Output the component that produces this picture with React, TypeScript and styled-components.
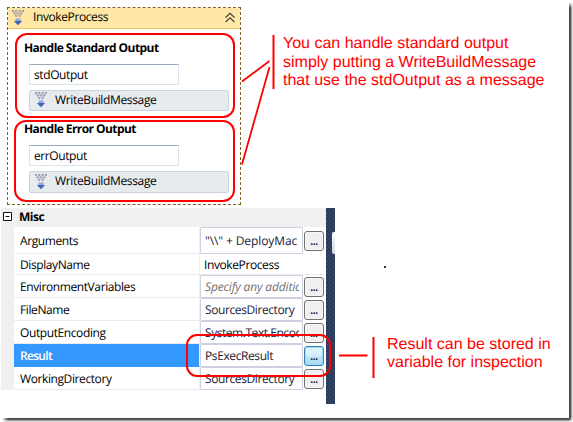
import React from "react";
import styled, { createGlobalStyle } from "styled-components";

const GlobalStyle = createGlobalStyle`
  * { box-sizing: border-box; }
  body { margin: 0; background: #fff; }
`;

const Page = styled.main`
  position: relative;
  display: grid;
  grid-template-columns: 569px 4px;
  grid-template-rows: 418px 4px;
  width: 573px;
  height: 422px;
  overflow: hidden;
  background: #fff;
  color: #000;
  font: 12px/16px "Open Sans", "Noto Sans", sans-serif;
  letter-spacing: -0.4px;
  text-rendering: geometricPrecision;
  white-space: nowrap;
`;

const Content = styled.div`
  display: grid;
  grid-template-columns: 335px 1fr;
`;

const RightShadow = styled.div`
  margin-top: 2px;
  background: linear-gradient(90deg, #484848 0 1px, #5c5c5c 1px 2px, #a0a0a0 2px 3px, #dadada 3px);
  mask-image: linear-gradient(180deg, transparent, #000 6px);
`;

const BottomShadow = styled.div`
  grid-column: 1 / -1;
  margin-left: 2px;
  background: linear-gradient(180deg, #484848 0 1px, #5c5c5c 1px 2px, #a0a0a0 2px 3px, #dadada 3px);
  mask-image: linear-gradient(90deg, transparent, #000 6px calc(100% - 4px), transparent);
`;

const Editors = styled.div`
  display: flex;
  flex-direction: column;
  gap: 3px;
  padding-top: 7px;
`;

const Designer = styled.section`
  display: flex;
  flex-direction: column;
  width: 234px;
  height: 198px;
  margin-left: 7px;
  border: 1px dashed #7d6327;
`;

const DesignerHeader = styled.header`
  display: flex;
  align-items: center;
  height: 21px;
  padding: 0 4px 2px 3px;
  background: #ffe8a6;
  border-bottom: 1px solid #e5c365;
`;

const DesignerTitle = styled.span`
  flex: 1;
  padding-left: 8px;
`;

const Handler = styled.div<{ $height: number }>`
  display: flex;
  flex-direction: column;
  height: ${(p) => p.$height}px;
  padding: 11px 11px 0 16px;
`;

const HandlerTitle = styled.h3`
  margin: 0;
  font-size: 12px;
  font-weight: 700;
  line-height: 16px;
  letter-spacing: -0.57px;
`;

const ArgumentBox = styled.div`
  width: 150px;
  height: 21px;
  margin: 8px 0 5px 5px;
  padding: 2px 4px;
  border: 1px solid #dbe4ee;
  border-top-color: #9aa9ba;
  border-radius: 1px;
`;

const Activity = styled.div`
  display: flex;
  align-items: center;
  gap: 7px;
  width: 200px;
  height: 22px;
  margin-left: 5px;
  padding: 0 4px 2px;
  background: #e7ebee;
  border: 1px solid #ccd3e0;
  border-radius: 2px;
  letter-spacing: -0.35px;
`;

const PropertyGrid = styled.section`
  display: grid;
  grid-template-columns: 325px 9px;
  height: 196px;
  margin-left: 1px;
`;

const Rows = styled.div`
  display: flex;
  flex-direction: column;
`;

const CategoryRow = styled.div`
  display: flex;
  align-items: center;
  gap: 7px;
  height: 19px;
  padding: 0 2px 2px;
  background: #f0f0f0;
  font-weight: 700;
  letter-spacing: -0.5px;
`;

const PropertyRow = styled.div<{ $height: number }>`
  display: grid;
  grid-template-columns: 186px 103px 21px;
  height: ${(p) => p.$height}px;
  border-left: 13px solid #f0f0f0;
`;

const PropertyName = styled.div<{ $selected?: boolean }>`
  display: flex;
  align-items: center;
  padding: 2px 0 0 6px;
  border-right: 1px solid #f0f0f0;
  border-bottom: 1px solid ${(p) => (p.$selected ? "#3399ff" : "#ebebeb")};
  background: ${(p) => (p.$selected ? "#3399ff" : "#fff")};
  color: ${(p) => (p.$selected ? "#fff" : "#000")};
  font-weight: ${(p) => (p.$selected ? 600 : 400)};
  letter-spacing: ${(p) => (p.$selected ? -0.7 : -0.4)}px;
`;

const PlainValue = styled.div`
  display: flex;
  grid-column: 2 / -1;
  align-items: center;
  padding: 1px 0 0 4px;
  border-bottom: 1px solid #ebebeb;
`;

const ExpressionBox = styled.div<{ $hint?: boolean }>`
  display: flex;
  align-items: center;
  padding-left: 4px;
  border: 1px solid #ccd0e0;
  border-radius: 1px;
  color: ${(p) => (p.$hint ? "#707070" : "#1b2036")};
  font-style: ${(p) => (p.$hint ? "italic" : "normal")};
`;

const ExpressionText = styled.span<{ $spacing?: number }>`
  width: 94px;
  overflow: hidden;
  letter-spacing: ${(p) => p.$spacing ?? -0.4}px;
`;

const MoreButton = styled.button<{ $active?: boolean }>`
  display: flex;
  align-items: flex-end;
  justify-content: center;
  align-self: center;
  width: 20px;
  height: 20px;
  margin: 0 0 0 1px;
  padding: 0 0 2px;
  border: 1px solid ${(p) => (p.$active ? "#3c7fb1" : "#707070")};
  border-radius: 3px;
  background: ${(p) => (p.$active ? "linear-gradient(#e3f4fc, #d6effb 50%, #bee6f8 50%, #a9dbf4)" : "#f0f0f0")};
  box-shadow: inset 0 0 0 1px ${(p) => (p.$active ? "#9bdcf5" : "#f8f8f8")};
  color: #1a1030;
  font: 700 10px/13px "Open Sans", sans-serif;
  letter-spacing: -0.4px;
`;

const Splitter = styled.div`
  display: flex;
  justify-content: flex-end;
  padding-top: 24px;
  background: #2d3d5e repeating-conic-gradient(#2b3a5a 0 25%, #334566 0 50%) 0 0 / 4px 4px;
`;

const SplitterTab = styled.div`
  width: 3px;
  height: 22px;
  border-radius: 2px 0 0 2px;
  background: linear-gradient(#fff, #cfd5e2);
`;

const Notes = styled.aside`
  display: flex;
  flex-direction: column;
  align-items: flex-start;
  color: #f00;
  font: 16px/18.5px "Liberation Sans", Arial, sans-serif;
  letter-spacing: 0;
`;

const Note = styled.p<{ $top: number; $left: number }>`
  margin: ${(p) => p.$top}px 0 0 ${(p) => p.$left}px;
`;

const Dot = styled.div`
  width: 2px;
  height: 2px;
  margin: 175px 0 0 49px;
  background: #333;
`;

const Overlay = styled.svg`
  position: absolute;
  inset: 0;
  pointer-events: none;
`;

const ActivityIcon = () => (
  <svg width="14" height="17" viewBox="0 0 14 17">
    <g fill="#fff" stroke="#686d88" strokeWidth="0.7">
      <circle cx="2" cy="2" r="0.8" /><circle cx="5.2" cy="2" r="0.8" /><circle cx="8.600" cy="2" r="0.8" /><circle cx="11.800" cy="2" r="0.8" />
      <circle cx="3.600" cy="4.400" r="0.8" /><circle cx="6.900" cy="4.400" r="0.8" /><circle cx="10.200" cy="4.400" r="0.8" />
      <circle cx="5.200" cy="6.800" r="0.8" /><circle cx="8.600" cy="6.800" r="0.8" />
    </g>
    <path d="M4.500 9.500h5v2.500h-5z" fill="#8ea6d8" />
    <path d="M2.800 12h8.400L7 16.200z" fill="#3f66b8" />
  </svg>
);

const CollapseIcon = () => (
  <svg width="12" height="12" viewBox="0 0 12 12" fill="none" stroke="#404040" strokeWidth="1.2">
    <path d="M1.500 6.500 6 2.300 10.500 6.500M1.500 11 6 6.800l4.500 4.200" />
  </svg>
);

const ToggleIcon = () => (
  <svg width="9" height="9" viewBox="0 0 9 9" fill="#fff" stroke="#111">
    <path d="M.5.5h8v8h-8zM2.500 4.500h4" />
  </svg>
);

type Property = {
  name: string;
  value: string;
  height: number;
  kind?: "plain" | "hint" | "selected";
  spacing?: number;
};

const properties: Property[] = [
  { name: "Arguments", value: '"\\\\" + DeployMac', height: 27, spacing: -0.1 },
  { name: "DisplayName", value: "InvokeProcess", height: 21, kind: "plain" },
  { name: "EnvironmentVariables", value: "Specify any additio", height: 23, kind: "hint", spacing: -0.15 },
  { name: "FileName", value: "SourcesDirectory", height: 23 },
  { name: "OutputEncoding", value: "System.Text.Encod", height: 23, spacing: -0.45 },
  { name: "Result", value: "PsExecResult", height: 23, kind: "selected" },
  { name: "WorkingDirectory", value: "SourcesDirectory", height: 23 },
];

const handlers = [
  { title: "Handle Standard Output", argument: "stdOutput", height: 81 },
  { title: "Handle Error Output", argument: "errOutput", height: 86 },
];

export default function App() {
  return (
    <>
      <GlobalStyle />
      <Page>
        <Content>
          <Editors>
            <Designer>
              <DesignerHeader>
                <ActivityIcon />
                <DesignerTitle>InvokeProcess</DesignerTitle>
                <CollapseIcon />
              </DesignerHeader>
              {handlers.map((h) => (
                <Handler key={h.title} $height={h.height}>
                  <HandlerTitle>{h.title}</HandlerTitle>
                  <ArgumentBox>{h.argument}</ArgumentBox>
                  <Activity>
                    <ActivityIcon />
                    <span>WriteBuildMessage</span>
                  </Activity>
                </Handler>
              ))}
            </Designer>
            <PropertyGrid>
              <Rows>
                <CategoryRow>
                  <ToggleIcon />
                  <span>Misc</span>
                </CategoryRow>
                {properties.map((p) => (
                  <PropertyRow key={p.name} $height={p.height}>
                    <PropertyName $selected={p.kind === "selected"}>{p.name}</PropertyName>
                    {p.kind === "plain" ? (
                      <PlainValue>{p.value}</PlainValue>
                    ) : (
                      <>
                        <ExpressionBox $hint={p.kind === "hint"}>
                          <ExpressionText $spacing={p.spacing}>{p.value}</ExpressionText>
                        </ExpressionBox>
                        <MoreButton $active={p.kind === "selected"}>...</MoreButton>
                      </>
                    )}
                  </PropertyRow>
                ))}
              </Rows>
              <Splitter>
                <SplitterTab />
              </Splitter>
            </PropertyGrid>
          </Editors>
          <Notes>
            <Note $top={35} $left={-52}>
              You can handle standard output<br />
              simply putting a WriteBuildMessage<br />
              that use the stdOutput as a message
            </Note>
            <Dot />
            <Note $top={68} $left={52}>
              Result can be stored in<br />
              variable for inspection
            </Note>
          </Notes>
        </Content>
        <RightShadow />
        <BottomShadow />
        <Overlay width="573" height="422" fill="none" stroke="#f00" strokeWidth="2">
          <rect x="16" y="34" width="218" height="83" rx="11" />
          <rect x="15" y="121" width="219" height="80" rx="11" />
          <rect x="187" y="335" width="143" height="41" rx="10" />
          <path d="M242 81.500 269.500 61M242 164.500 269.500 67" strokeWidth="1.8" />
          <path d="M273.500 35v54M373.500 337v41M339 355.500h28.500" strokeWidth="2" />
        </Overlay>
      </Page>
    </>
  );
}
